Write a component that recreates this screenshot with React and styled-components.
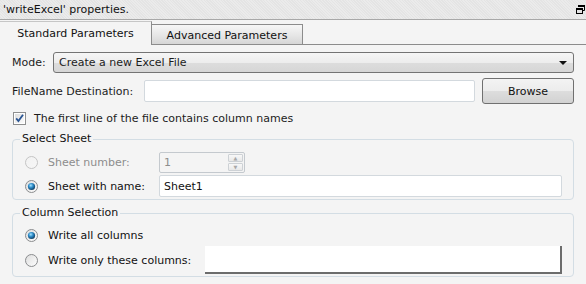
import React from "react"
import styled, { createGlobalStyle } from "styled-components"

const GlobalStyle = createGlobalStyle`
  html, body {
    margin: 0;
    padding: 0;
    background: #f4f4f4;
  }
  body {
    font-family: "DejaVu Sans", Verdana, sans-serif;
    font-size: 11px;
    color: #1c1c1c;
  }
`

function RestoreIcon() {
  return (
    <svg width="9" height="9" viewBox="0 0 9 9">
      <path d="M2.5 0.5h6v5h-2" fill="none" stroke="#000" />
      <rect x="2" y="0" width="7" height="2" fill="#000" />
      <rect x="0.5" y="3.5" width="6" height="5" fill="#e3e3e3" stroke="#000" />
      <rect x="0" y="3" width="7" height="2" fill="#000" />
    </svg>
  )
}

function Radio({ checked, disabled }) {
  const id = checked ? "rOn" : disabled ? "rDis" : "rOff"
  return (
    <RadioBox>
      <svg width="13" height="13" viewBox="0 0 13 13">
        <defs>
          <linearGradient id={id + "bg"} x1="0" y1="0" x2="1" y2="1">
            <stop offset="0" stopColor={disabled ? "#f2f2f2" : "#dcdcdc"} />
            <stop offset="1" stopColor={disabled ? "#f6f6f6" : "#ffffff"} />
          </linearGradient>
          <radialGradient id={id + "dot"} cx="0.4" cy="0.35" r="0.7">
            <stop offset="0" stopColor="#a6e4ff" />
            <stop offset="0.45" stopColor="#2b8ac8" />
            <stop offset="1" stopColor="#0c3556" />
          </radialGradient>
        </defs>
        <circle
          cx="6.5"
          cy="6.5"
          r="6"
          fill={`url(#${id}bg)`}
          stroke={disabled ? "#c4c4c4" : "#8a8c8e"}
        />
        {checked && <circle cx="6.5" cy="6.5" r="3.6" fill={`url(#${id}dot)`} />}
      </svg>
    </RadioBox>
  )
}

function CheckBox() {
  return (
    <CheckFrame>
      <svg width="13" height="13" viewBox="0 0 13 13">
        <defs>
          <linearGradient id="cbg" x1="0" y1="0" x2="1" y2="1">
            <stop offset="0" stopColor="#dedede" />
            <stop offset="1" stopColor="#fbfbfb" />
          </linearGradient>
        </defs>
        <rect x="0.5" y="0.5" width="12" height="12" fill="#fff" stroke="#8e8f8f" />
        <rect x="2" y="2" width="9" height="9" fill="url(#cbg)" />
        <path d="M3.2 6.4 L5.4 9 L10 2.8" fill="none" stroke="#2a5593" strokeWidth="1.8" />
      </svg>
    </CheckFrame>
  )
}

export default function App() {
  return (
    <>
      <GlobalStyle />
      <Window>
        <TitleBar>
          <Title>'writeExcel' properties.</Title>
          <RestoreIcon />
        </TitleBar>
        <TabRow>
          <Tab active>Standard Parameters</Tab>
          <Tab>Advanced Parameters</Tab>
          <TabFiller />
        </TabRow>
        <Content>
          <ModeRow>
            <FieldLabel width={41}>Mode:</FieldLabel>
            <Select>
              <span>Create a new Excel File</span>
              <Arrow />
            </Select>
          </ModeRow>
          <FileRow>
            <FieldLabel width={132}>FileName Destination:</FieldLabel>
            <TextInput />
            <Button>Browse</Button>
          </FileRow>
          <CheckRow>
            <CheckBox />
            <span>The first line of the file contains column names</span>
          </CheckRow>
          <Group>
            <Legend>Select Sheet</Legend>
            <OptionRow height={21}>
              <Radio disabled />
              <OptionLabel width={111} disabled>Sheet number:</OptionLabel>
              <Spinner>
                <SpinValue>1</SpinValue>
                <SpinButtons>
                  <SpinButton>▲</SpinButton>
                  <SpinButton>▼</SpinButton>
                </SpinButtons>
              </Spinner>
            </OptionRow>
            <OptionRow height={22} gap={2}>
              <Radio checked />
              <OptionLabel width={111}>Sheet with name:</OptionLabel>
              <SheetInput>Sheet1</SheetInput>
            </OptionRow>
          </Group>
          <Group compact>
            <Legend>Column Selection</Legend>
            <OptionRow height={20}>
              <Radio checked />
              <OptionLabel>Write all columns</OptionLabel>
            </OptionRow>
            <OptionRow height={28} gap={1}>
              <Radio />
              <OptionLabel width={157}>Write only these columns:</OptionLabel>
              <ColumnsInput />
            </OptionRow>
          </Group>
        </Content>
      </Window>
    </>
  )
}

const Window = styled.div`
  width: 586px;
  height: 284px;
  overflow: hidden;
  background: #f4f4f4;
`

const TitleBar = styled.div`
  height: 19px;
  border-bottom: 1px solid #a8a8a8;
  display: flex;
  align-items: center;
  justify-content: space-between;
  padding: 0 1px 0 3px;
  background-color: #e4e4e4;
  background-image: repeating-linear-gradient(
    45deg,
    rgba(255, 255, 255, 0.25) 0px,
    rgba(255, 255, 255, 0.25) 1px,
    transparent 1px,
    transparent 2px
  );
`

const Title = styled.span`
  color: #111;
  font-size: 11px;
`

const TabRow = styled.div`
  height: 25px;
  display: flex;
  align-items: stretch;
`

const Tab = styled.div`
  width: ${(p) => (p.active ? "152px" : "151px")};
  box-sizing: border-box;
  margin-top: ${(p) => (p.active ? "1px" : "4px")};
  display: flex;
  align-items: center;
  justify-content: center;
  border-top: 1px solid ${(p) => (p.active ? "#c6c6c6" : "#8c8c8c")};
  border-right: 1px solid #8c8c8c;
  border-bottom: ${(p) => (p.active ? "none" : "1px solid #8c8c8c")};
  background: ${(p) =>
    p.active ? "#f4f4f4" : "linear-gradient(#f7f7f7, #e6e6e6 55%, #d6d6d6)"};
  color: #111;
  padding-top: ${(p) => (p.active ? "0" : "1px")};
`

const TabFiller = styled.div`
  flex: 1;
  border-bottom: 1px solid #8c8c8c;
`

const Content = styled.div`
  padding: 7px 12px 0 12px;
  display: flex;
  flex-direction: column;
`

const ModeRow = styled.div`
  display: flex;
  align-items: center;
  height: 21px;
`

const FieldLabel = styled.span`
  flex: none;
  width: ${(p) => p.width}px;
  white-space: nowrap;
`

const Select = styled.div`
  flex: 1;
  height: 21px;
  box-sizing: border-box;
  border: 1px solid #747474;
  border-radius: 3px;
  display: flex;
  align-items: center;
  justify-content: space-between;
  padding: 0 6px 0 5px;
  background: linear-gradient(#f6f6f6, #ededed 50%, #dddddd 51%, #d6d6d6);
`

const Arrow = styled.span`
  width: 0;
  height: 0;
  border-left: 4px solid transparent;
  border-right: 4px solid transparent;
  border-top: 4px solid #111;
`

const FileRow = styled.div`
  margin-top: 5px;
  height: 26px;
  display: flex;
  align-items: center;
`

const TextInput = styled.div`
  width: 331px;
  height: 22px;
  box-sizing: border-box;
  border: 1px solid #d3d9de;
  border-radius: 2px;
  background: #fff;
`

const Button = styled.div`
  margin-left: auto;
  width: 92px;
  height: 26px;
  box-sizing: border-box;
  border: 1px solid #707070;
  border-radius: 3px;
  display: flex;
  align-items: center;
  justify-content: center;
  color: #111;
  background: linear-gradient(#f3f3f3, #ececec 50%, #dddddd 51%, #d2d2d2);
`

const CheckRow = styled.div`
  margin-top: 6px;
  height: 16px;
  display: flex;
  align-items: center;
`

const CheckFrame = styled.span`
  display: flex;
  margin: 0 8px 0 1px;
`

const Group = styled.fieldset`
  margin: 6px 0 0 0;
  padding: ${(p) => (p.compact ? "5px 11px 2px 12px" : "6px 11px 2px 12px")};
  border: 1px solid #d3dde4;
  border-radius: 4px;
  min-width: 0;
`

const Legend = styled.legend`
  margin-left: -5px;
  padding: 0 2px 0 2px;
  line-height: 14px;
  color: #111;
`

const OptionRow = styled.div`
  display: flex;
  align-items: center;
  height: ${(p) => p.height}px;
  margin-top: ${(p) => p.gap || 0}px;
`

const RadioBox = styled.span`
  display: flex;
  width: 13px;
  height: 13px;
`

const OptionLabel = styled.span`
  margin-left: 10px;
  white-space: nowrap;
  width: ${(p) => (p.width ? `${p.width}px` : "auto")};
  color: ${(p) => (p.disabled ? "#8d8d8d" : "#111")};
`

const Spinner = styled.div`
  width: 86px;
  height: 21px;
  box-sizing: border-box;
  border: 1px solid #c4c9ce;
  border-radius: 2px;
  display: flex;
  background: #f4f4f4;
`

const SpinValue = styled.span`
  flex: 1;
  display: flex;
  align-items: center;
  padding-left: 4px;
  color: #8d8d8d;
`

const SpinButtons = styled.div`
  width: 15px;
  display: flex;
  flex-direction: column;
  padding: 1px 1px 1px 0;
  gap: 1px;
`

const SpinButton = styled.span`
  flex: 1;
  display: flex;
  align-items: center;
  justify-content: center;
  font-size: 5px;
  color: #a8a8a8;
  border: 1px solid #cdd1d5;
  border-radius: 1px;
  background: linear-gradient(#f8f8f8, #e8e8e8);
`

const SheetInput = styled.div`
  flex: 1;
  height: 22px;
  box-sizing: border-box;
  border: 1px solid #d3d9de;
  border-radius: 2px;
  background: #fff;
  display: flex;
  align-items: center;
  padding-left: 4px;
  color: #111;
`

const ColumnsInput = styled.div`
  flex: 1;
  height: 28px;
  box-sizing: border-box;
  background: #fff;
  border-right: 2px solid #6c6c6c;
  border-bottom: 2px solid #6c6c6c;
`
